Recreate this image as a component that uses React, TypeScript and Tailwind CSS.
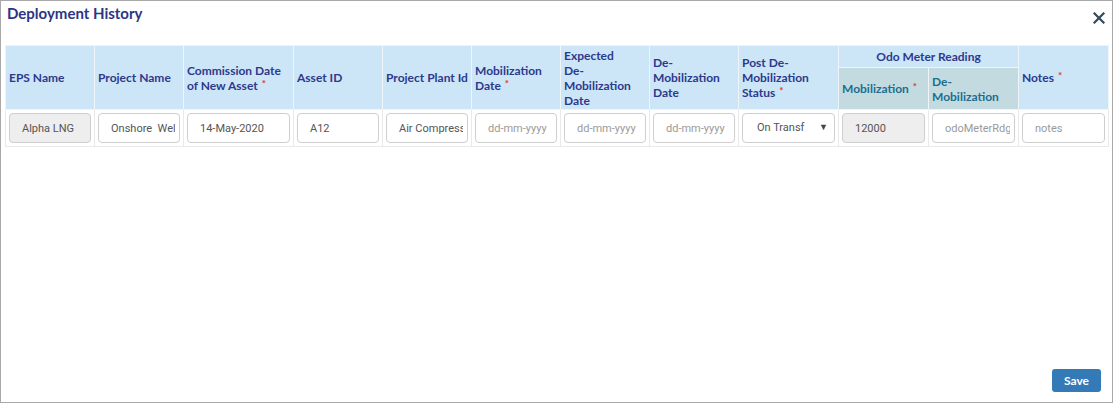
const Req = () => <span className="relative -top-[3px] leading-none text-[#e3342f] text-[10px] ml-[4px]">*</span>;

interface Cell {
  value: string;
  placeholder?: string;
  disabled?: boolean;
  select?: boolean;
}

const row: Cell[] = [
  { value: "Alpha LNG", disabled: true },
  { value: "Onshore  Well Services" },
  { value: "14-May-2020" },
  { value: "A12" },
  { value: "Air Compressor" },
  { value: "", placeholder: "dd-mm-yyyy" },
  { value: "", placeholder: "dd-mm-yyyy" },
  { value: "", placeholder: "dd-mm-yyyy" },
  { value: "On Transfer", select: true },
  { value: "12000", disabled: true },
  { value: "", placeholder: "odoMeterRdg" },
  { value: "", placeholder: "notes" },
];

const widths = [89, 89, 110, 89, 89, 89, 89, 89, 100, 90, 90, 90];

export default function App() {
  const th = "border border-[#eef4f8] bg-[#cce5f7] text-left align-middle px-[3px] text-[12px] font-bold leading-[15px] text-[#2d3a8c]";
  const sub = "border border-[#eef4f8] bg-[#c3dbe0] text-left align-middle px-[3px] text-[12px] font-bold leading-[15px] text-[#1b6e8e]";
  return (
    <div className="w-[1113px] h-[403px] bg-white border border-[#a8a8a8] flex flex-col font-['Lato','Roboto',sans-serif]">
      <div className="flex items-start justify-between pl-[6px] pr-[7px] pt-[3px] h-[44px]">
        <h1 className="text-[15px] font-bold text-[#2b3585] leading-[18px]">Deployment History</h1>
        <button className="mt-[8px] text-[#2f4a5c]">
          <svg width="12" height="12" viewBox="0 0 12 12">
            <path d="M1.5 1.5 L10.5 10.5 M10.5 1.5 L1.5 10.5" stroke="currentColor" strokeWidth="2.2" strokeLinecap="square" />
          </svg>
        </button>
      </div>
      <div className="px-[4px]">
        <table className="table-fixed border-collapse w-[1103px]">
          <colgroup>
            {widths.map((w, i) => (
              <col key={i} style={{ width: w }} />
            ))}
          </colgroup>
          <thead>
            <tr className="h-[22px]">
              <th rowSpan={2} className={th}>EPS Name</th>
              <th rowSpan={2} className={th}>Project Name</th>
              <th rowSpan={2} className={th}>Commission Date of New Asset<Req /></th>
              <th rowSpan={2} className={th}>Asset ID</th>
              <th rowSpan={2} className={th}>Project Plant Id</th>
              <th rowSpan={2} className={th}>Mobilization Date<Req /></th>
              <th rowSpan={2} className={th}>Expected<br />De-<br />Mobilization Date</th>
              <th rowSpan={2} className={th}>De-Mobilization Date</th>
              <th rowSpan={2} className={th}>Post De-Mobilization Status<Req /></th>
              <th colSpan={2} className={`${th} !text-center`}>Odo Meter Reading</th>
              <th rowSpan={2} className={th}>Notes<Req /></th>
            </tr>
            <tr className="h-[42px]">
              <th className={sub}>Mobilization<Req /></th>
              <th className={sub}>De-Mobilization</th>
            </tr>
          </thead>
          <tbody>
            <tr>
              {row.map((c, i) => (
                <td key={i} className="border border-[#e9e9e9] p-[3px]">
                  {c.select ? (
                    <div className="h-[30px] rounded-[4px] border border-[#cfcfcf] bg-white flex items-center pl-[14px] pr-[6px] font-['Roboto',sans-serif] text-[11px] text-[#555]">
                      <span className="flex-1 overflow-hidden whitespace-nowrap">On Transf</span>
                      <span className="text-[9px] text-[#444]">▼</span>
                    </div>
                  ) : (
                    <input
                      readOnly
                      value={c.value}
                      placeholder={c.placeholder}
                      className={`w-full h-[30px] rounded-[4px] border border-[#cfcfcf] pl-[12px] pr-[4px] font-['Roboto',sans-serif] text-[11px] text-[#555] placeholder:text-[#9a9a9a] outline-none ${c.disabled ? "bg-[#eeeeee]" : "bg-white"}`}
                    />
                  )}
                </td>
              ))}
            </tr>
          </tbody>
        </table>
      </div>
      <div className="flex-1" />
      <div className="flex justify-end pr-[11px] pb-[10px]">
        <button className="h-[23px] px-[12px] rounded-[3px] bg-[#337ab7] text-white text-[12px] font-bold">Save</button>
      </div>
    </div>
  );
}
